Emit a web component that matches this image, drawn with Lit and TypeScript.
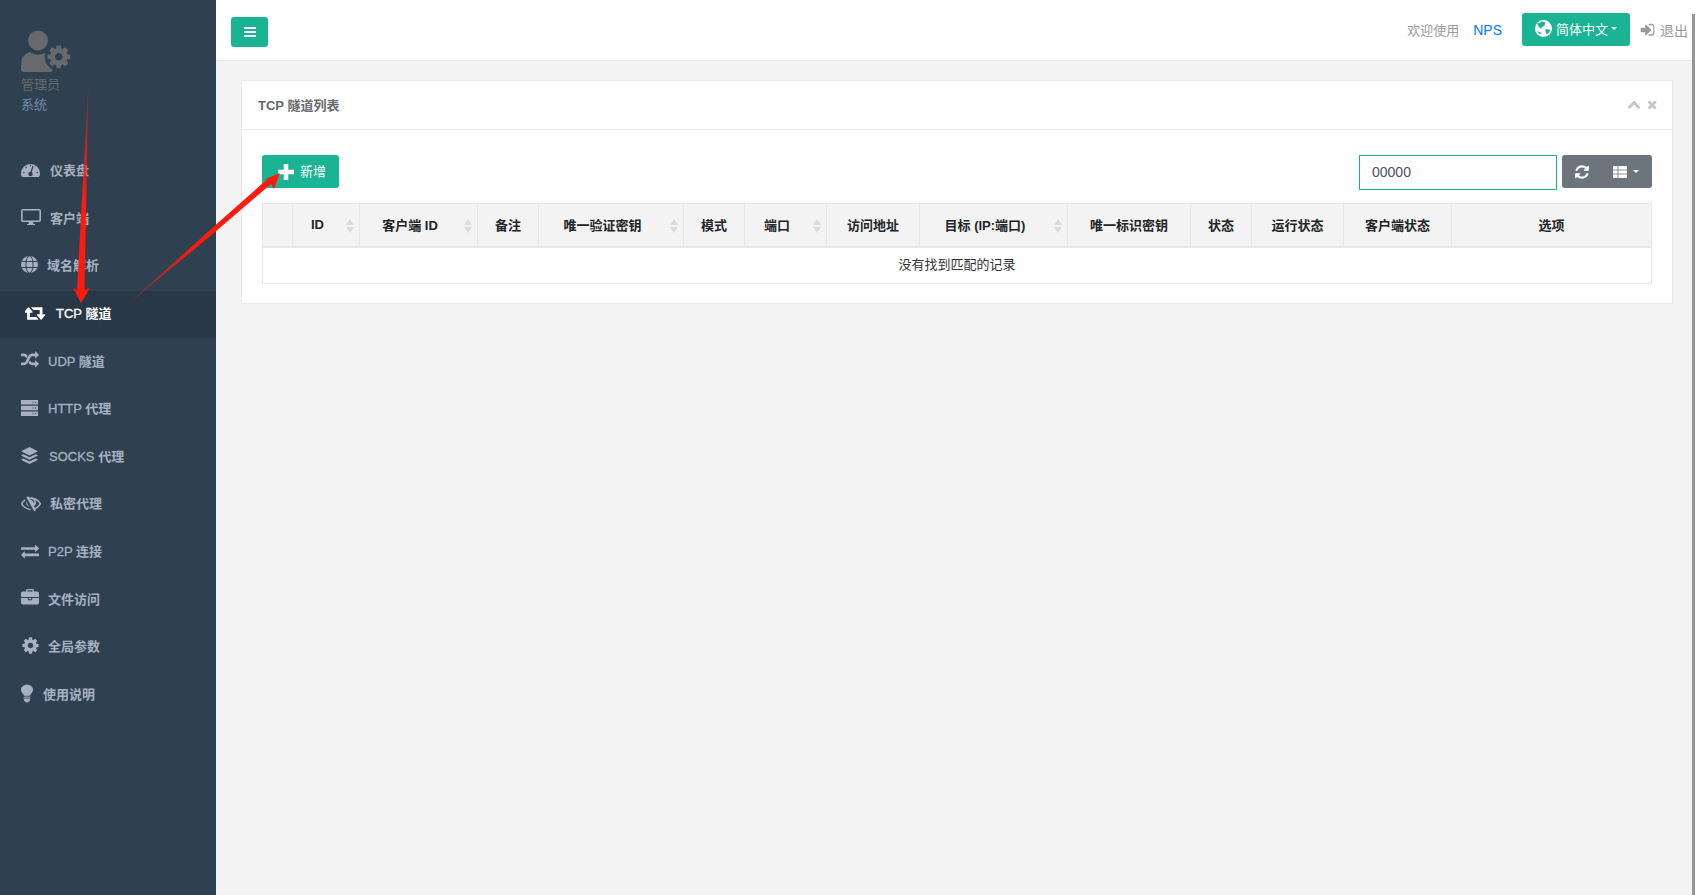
import { LitElement, html, css, svg } from "lit";
import { customElement } from "lit/decorators.js";

const FA = (d: string, w = 1792, vb = "0 0") => html`<svg viewBox="${vb} ${w} 1792" fill="currentColor" aria-hidden="true"><path d="${d}"></path></svg>`;

const GEAR = "M1152 896q0-106-75-181t-181-75-181 75-75 181 75 181 181 75 181-75 75-181zm512-109v222q0 12-8 23t-20 13l-185 28q-19 54-39 91 35 50 107 138 10 12 10 25t-9 23q-27 37-99 108t-94 71q-12 0-26-9l-138-108q-44 23-91 38-16 136-29 186-7 28-36 28h-222q-14 0-24.500-8.500t-11.500-21.500l-28-184q-49-16-90-37l-141 107q-10 9-25 9-14 0-25-11-126-114-165-168-7-10-7-23 0-12 8-23 15-21 51-66.500t54-70.500q-27-50-41-99l-183-27q-13-2-21-12.500t-8-23.500v-222q0-12 8-23t19-13l186-28q14-46 39-92-40-57-107-138-10-12-10-24 0-10 9-23 26-36 98.500-107.500t94.500-71.500q13 0 26 10l138 107q44-23 91-38 16-136 29-186 7-28 36-28h222q14 0 24.500 8.500t11.500 21.500l28 184q49 16 90 37l142-107q9-9 24-9 13 0 25 10 129 119 165 170 7 8 7 22 0 12-8 23-15 21-51 66.500t-54 70.500q26 50 41 98l183 28q13 2 21 12.500t8 23.500z";

const tachometer = html`<svg viewBox="0 0 19 15" fill="currentColor" aria-hidden="true"><path d="M0 11.500a9.500 9.500 0 0 1 19 0q0 2-1 3.500H1q-1-1.500-1-3.500z"></path><g stroke="#2f4050" stroke-width="1.300" stroke-linecap="round" fill="none"><path d="M9.500 11.500L12 4.500M2.800 10.500h.1M5 5.500h.1M9.500 3.500h.1M16.200 10.500h.1"></path></g><circle cx="9.500" cy="12" r="2.200" fill="#2f4050"></circle></svg>`;
const desktop = html`<svg viewBox="0 0 20 16" aria-hidden="true"><rect x=".8" y=".8" width="18.400" height="11.400" rx="1" fill="none" stroke="currentColor" stroke-width="1.600"></rect><path d="M8 13h4l.5 2h1.500v1H6v-1h1.500z" fill="currentColor"></path></svg>`;
const globe = html`<svg viewBox="0 0 17 17" aria-hidden="true"><circle cx="8.500" cy="8.500" r="8.500" fill="currentColor"></circle><g stroke="#2f4050" stroke-width="1" fill="none"><ellipse cx="8.500" cy="8.500" rx="3.600" ry="8.500"></ellipse><path d="M.5 5.500h16M.5 11.500h16"></path></g></svg>`;
const server = html`<svg viewBox="0 0 17 16" aria-hidden="true"><path fill="currentColor" d="M0 0h17v4.600H0zM0 5.700h17v4.600H0zM0 11.400h17V16H0z"></path><path stroke="#2f4050" stroke-width="1" d="M11.500 2.300h1M14 2.300h1M11.500 8h1M14 8h1M11.500 13.700h1M14 13.700h1"></path></svg>`;
const layers = html`<svg viewBox="0 0 17 17" fill="currentColor" aria-hidden="true"><path d="M8.500 0L17 4.300 8.500 8.600 0 4.300zM2.400 7.200l6.100 3 6.100-3L17 8.500l-8.500 4.300L0 8.500zM2.400 11.400l6.100 3 6.100-3L17 12.700 8.500 17 0 12.700z"></path></svg>`;
const th = html`<svg viewBox="0 0 14 12" aria-hidden="true"><path fill="#fff" d="M0 0h14v12H0z"></path><path stroke="#6c757d" stroke-width=".8" d="M5 0v12M0 4h14M0 8h14"></path></svg>`;
const langGlobe = html`<svg viewBox="0 0 16 16" aria-hidden="true"><circle cx="8" cy="8" r="8" fill="#fff"></circle><path fill="#1ab394" d="M6.500 1.500q3 0 3 2t-2 2.500-1.500 2-2.500-2 .5-3zM9.500 9q3-1 5 .5-1 3-3.500 4-1-2-1.500-4.500zM2 10.500q2 0 3.500 1.500l1 1.500q-2 0-3-1z"></path></svg>`;

const bars = "M1664 1344v128q0 26-19 45t-45 19h-1408q-26 0-45-19t-19-45v-128q0-26 19-45t45-19h1408q26 0 45 19t19 45zm0-512v128q0 26-19 45t-45 19h-1408q-26 0-45-19t-19-45v-128q0-26 19-45t45-19h1408q26 0 45 19t19 45zm0-512v128q0 26-19 45t-45 19h-1408q-26 0-45-19t-19-45v-128q0-26 19-45t45-19h1408q26 0 45 19t19 45z";
const retweet = "M1216 1504q0 13-9.500 22.500t-22.500 9.500h-960q-8 0-13.500-2t-9-7-5.500-8-3-11.500-1-11.500v-600h-192q-26 0-45-19t-19-45q0-24 15-41l320-384q19-22 49-22t49 22l320 384q15 17 15 41 0 26-19 45t-45 19h-192v384h576q16 0 25 11l160 192q7 10 7 21zm640-416q0 24-15 41l-320 384q-20 23-49 23t-49-23l-320-384q-15-17-15-41 0-26 19-45t45-19h192v-384h-576q-16 0-25-12l-160-192q-7-9-7-20 0-13 9.500-22.500t22.500-9.500h960q8 0 13.500 2t9 7 5.500 8 3 11.500 1 11.500v600h192q26 0 45 19t19 45z";
const random = "M666 481q-60 92-137 273-22-45-37-72.500t-40.500-63.500-51-56.500-63-35-81.500-14.500h-224q-14 0-23-9t-9-23v-192q0-14 9-23t23-9h224q250 0 410 225zm1126 799q0 14-9 23l-320 320q-9 9-23 9-13 0-22.500-9.500t-9.500-22.500v-192q-32 0-85 .5t-81 1-73-1-71-5-64-10.500-63-18.500-58-28.500-59-40-55-53.500-56-69.500q59-93 136-273 22 45 37 72.500t40.500 63.500 51 56.500 63 35 81.500 14.500h256v-192q0-14 9-23t23-9q12 0 24 10l319 319q9 9 9 23zm0-896q0 14-9 23l-320 320q-9 9-23 9-13 0-22.500-9.500t-9.500-22.500v-192h-256q-48 0-87 15t-69 45-51 61.500-45 77.500q-32 62-78 171-29 66-49.500 111t-54 105-64 100-74 83-90 68.500-106.500 42-128 16.500h-224q-14 0-23-9t-9-23v-192q0-14 9-23t23-9h224q48 0 87-15t69-45 51-61.500 45-77.500q32-62 78-171 29-66 49.500-111t54-105 64-100 74-83 90-68.500 106.500-42 128-16.500h256v-192q0-14 9-23t23-9q12 0 24 10l319 319q9 9 9 23z";
const eyeSlashD = "M555 1335l78-141q-87-63-136-159t-49-203q0-121 61-225-229 117-381 353 167 258 427 375zm389-759q0-20-14-34t-34-14q-125 0-214.500 89.500t-89.500 214.500q0 20 14 34t34 14 34-14 14-34q0-86 61-147t147-61q20 0 34-14t14-34zm363-191q0 7-1 9-106 189-316 567t-315 566l-49 89q-10 16-28 16-12 0-134-70-16-10-16-28 0-12 44-87-143-65-263.500-173t-208.500-245q-20-31-20-69t20-69q153-235 380-371t496-136q89 0 180 17l54-97q10-16 28-16 5 0 18 6t31 15.500 33 18.500 31.500 18.500 19.500 11.500q16 10 16 27zm37 447q0 139-79 253.500t-209 164.500l280-502q8 45 8 84zm448 128q0 35-20 69-39 64-109 145-150 172-347.500 267t-419.500 95l74-132q212-18 392.500-137t301.500-307q-115-179-282-294l63-112q95 64 182.500 153t144.500 184q20 34 20 69z";
const eyeSlash = html`<svg viewBox="0 0 1792 1792" fill="currentColor" aria-hidden="true"><g transform="translate(1792 0) scale(-1 1)"><path d="${eyeSlashD}"></path></g></svg>`;
const exchange = "M1792 1184v192q0 13-9.500 22.500t-22.500 9.500h-1376v192q0 13-9.500 22.500t-22.500 9.500q-12 0-24-10l-319-320q-9-9-9-22 0-14 9-23l320-320q9-9 23-9 13 0 22.500 9.500t9.500 22.500v192h1376q13 0 22.500 9.500t9.500 22.500zm0-544q0 14-9 23l-320 320q-9 9-23 9-13 0-22.500-9.500t-9.500-22.500v-192h-1376q-13 0-22.500-9.500t-9.500-22.500v-192q0-13 9.500-22.500t22.500-9.500h1376v-192q0-14 9-23t23-9q12 0 24 10l319 319q9 9 9 23z";
const briefcase = "M640 256h512v-128h-512v128zm1152 640v480q0 66-47 113t-113 47h-1472q-66 0-113-47t-47-113v-480h672v160q0 26 19 45t45 19h320q26 0 45-19t19-45v-160h672zm-768 0v128h-256v-128h256zm768-480v384h-1792v-384q0-66 47-113t113-47h352v-160q0-40 28-68t68-28h576q40 0 68 28t28 68v160h352q66 0 113 47t47 113z";
const bulbD = "M1024 576q0 155-103 268-45 49-74.500 87t-59.500 95.500-34 107.500q47 28 47 82 0 37-25 64 25 27 25 64 0 52-45 81 13 23 13 47 0 46-31.500 71t-77.500 25q-20 44-60 70t-87 26-87-26-60-70q-46 0-77.500-25t-31.500-71q0-24 13-47-45-29-45-81 0-37 25-64-25-27-25-64 0-54 47-82-4-50-34-107.500t-59.500-95.500-74.500-87q-103-113-103-268 0-99 44.500-184.500t117-142 164-89 186.500-32.500 186.500 32.500 164 89 117 142 44.500 184.500z";
const bulb = html`<svg viewBox="0 0 1024 1792" aria-hidden="true"><path fill="currentColor" d="${bulbD}"></path><path stroke="#2f4050" stroke-width="70" d="M250 1130h524M250 1290h524"></path></svg>`;
const signIn = "M1184 896q0 26-19 45l-544 544q-19 19-45 19t-45-19-19-45v-288h-448q-26 0-45-19t-19-45v-384q0-26 19-45t45-19h448v-288q0-26 19-45t45-19 45 19l544 544q19 19 19 45zm352-352v704q0 119-84.500 203.500t-203.500 84.500h-320q-32 0-32-32v-96q0-32 32-32h320q66 0 113-47t47-113v-704q0-66-47-113t-113-47h-320q-32 0-32-32v-96q0-32 32-32h320q119 0 203.500 84.500t84.500 203.500z";
const refresh = "M1639 1056q0 5-1 7-64 268-268 434.500t-478 166.500q-146 0-282.500-55t-243.500-157l-129 129q-19 19-45 19t-45-19-19-45v-448q0-26 19-45t45-19h448q26 0 45 19t19 45-19 45l-137 137q71 66 161 102t187 36q134 0 250-65t186-179q11-17 53-117 8-23 30-23h192q13 0 22.500 9.500t9.500 22.500zm25-800v448q0 26-19 45t-45 19h-448q-26 0-45-19t-19-45 19-45l138-138q-148-137-349-137-134 0-250 65t-186 179q-11 17-53 117-8 23-30 23h-199q-13 0-22.500-9.500t-9.500-22.500v-7q65-268 270-434.500t480-166.500q146 0 284 55.500t245 156.500l130-129q19-19 45-19t45 19 19 45z";
const times = "M1490 1322q0 40-28 68l-136 136q-28 28-68 28t-68-28l-294-294-294 294q-28 28-68 28t-68-28l-136-136q-28-28-28-68t28-68l294-294-294-294q-28-28-28-68t28-68l136-136q28-28 68-28t68 28l294 294 294-294q28-28 68-28t68 28l136 136q28 28 28 68t-28 68l-294 294 294 294q28 28 28 68z";
const chevUp = "M1683 1331l-166 165q-19 19-45 19t-45-19l-531-531-531 531q-19 19-45 19t-45-19l-166-165q-19-19-19-45.500t19-45.500l742-741q19-19 45-19t45 19l742 741q19 19 19 45.500t-19 45.500z";

interface NavItem { latin?: string; label: string; icon: unknown; box: number; size: number; active?: boolean }
const NAV: NavItem[] = [
  { label: "仪表盘", icon: tachometer, box: 29, size: 19 },
  { label: "客户端", icon: desktop, box: 29, size: 20 },
  { label: "域名解析", icon: globe, box: 26, size: 17 },
  { latin: "TCP ", label: "隧道", icon: FA(retweet, 1920), box: 31, size: 21, active: true },
  { latin: "UDP ", label: "隧道", icon: FA(random), box: 27, size: 18 },
  { latin: "HTTP ", label: "代理", icon: server, box: 27, size: 17 },
  { latin: "SOCKS ", label: "代理", icon: layers, box: 28, size: 17 },
  { label: "私密代理", icon: eyeSlash, box: 29, size: 20 },
  { latin: "P2P ", label: "连接", icon: FA(exchange), box: 27, size: 18 },
  { label: "文件访问", icon: FA(briefcase), box: 27, size: 18 },
  { label: "全局参数", icon: FA(GEAR, 1792), box: 27, size: 19 },
  { label: "使用说明", icon: bulb, box: 22, size: 12 },
];

interface Col { label: string; w: number; sort?: boolean }
const COLS: Col[] = [
  { label: "", w: 30 },
  { label: "ID", w: 67, sort: true },
  { label: "客户端 ID", w: 118, sort: true },
  { label: "备注", w: 61 },
  { label: "唯一验证密钥", w: 145, sort: true },
  { label: "模式", w: 61 },
  { label: "端口", w: 82, sort: true },
  { label: "访问地址", w: 93 },
  { label: "目标 (IP:端口)", w: 148, sort: true },
  { label: "唯一标识密钥", w: 123 },
  { label: "状态", w: 61 },
  { label: "运行状态", w: 92 },
  { label: "客户端状态", w: 108 },
  { label: "选项", w: 200 },
];

@customElement("app-root")
export class AppRoot extends LitElement {
  static styles = css`
    :host { display: block; position: relative; width: 1695px; height: 895px; overflow: hidden; background: #f3f3f4;
      font-family: "Liberation Sans", "Noto Sans CJK SC", Arial, sans-serif; font-size: 13px; color: #676a6c; }
    * { box-sizing: border-box; }
    svg { display: block; }
    .layout { display: flex; height: 100%; }
    .side { width: 216px; flex: none; background: #2f4050; }
    .profile { height: 148px; padding: 30px 0 0 21px; }
    .avatar { width: 50px; height: 42px; margin-bottom: 3px; }
    .role { line-height: 20px; color: #676a6c; }
    .sys { line-height: 20px; color: #6f8caa; }
    .nav { margin: 0; padding: 0; list-style: none; }
    .nav li { display: flex; align-items: center; height: 47.6px; padding: 0 0 4px 21px; color: #a7b1c2; font-weight: 600; white-space: pre; }
    .nav li.active { background: #293846; color: #fff; padding-left: 25px; }
    .nav .ic { display: block; flex: none; }
    .nav .lat { font-weight: 400; -webkit-text-stroke: .3px currentColor; }
    .main { flex: 1; min-width: 0; display: flex; flex-direction: column; }
    .top { height: 61px; flex: none; display: flex; align-items: center; background: #fff; border-bottom: 1px solid #e7eaec; padding: 0 7px 0 15px; }
    .burger { width: 37px; height: 30px; display: flex; align-items: center; justify-content: center; background: #1ab394; color: #fff; border-radius: 3px; margin-top: 3px; }
    .burger svg { width: 14px; height: 14px; }
    .spacer { flex: 1; }
    .welcome { color: #999c9e; margin-bottom: 2px; }
    .nps { color: #007bff; font-size: 14px; margin: 0 20px 0 14px; }
    .lang { display: flex; align-items: center; width: 108px; height: 33px; padding-left: 13px; background: #1ab394; color: #fff; border-radius: 3px; margin-bottom: 2px; padding-bottom: 2px; }
    .lang svg { width: 17px; height: 17px; margin-right: 4px; }
    .caret { width: 0; height: 0; border: 3.500px solid transparent; border-top-color: currentColor; border-bottom: 0; margin-left: 3px; }
    .logout { display: flex; align-items: center; margin-left: 10px; color: #999c9e; font-size: 14px; margin-bottom: 1px; }
    .logout svg { width: 15px; height: 16px; margin-right: 5px; }
    .content { padding: 19px 22px 0 25px; }
    .card { background: #fff; border: 1px solid #e7eaec; height: 224px; }
    .card-h { height: 49px; display: flex; align-items: center; padding: 0 14px 2px 16px; border-bottom: 1px solid #e7eaec; font-weight: 700; color: #676a6c; }
    .tools { display: flex; align-items: center; gap: 4px; color: #c4c6c8; margin-left: auto; }
    .tools svg { width: 14px; height: 14px; }
    .tools svg + svg { width: 13px; height: 13px; }
    .card-b { padding: 25px 20px 0 20px; }
    .bar { display: flex; align-items: flex-start; height: 48px; }
    .add { display: flex; align-items: center; width: 77px; height: 33px; padding-left: 16px; background: #1ab394; color: #fff; border-radius: 3px; }
    .add svg { width: 16px; height: 16px; margin-right: 6px; }
    .add span { margin-bottom: 2px; }
    .search { margin-left: auto; width: 198px; height: 35px; border: 1px solid #1ab394; padding: 0 12px 2px; display: flex; align-items: center; font-size: 14px; color: #495057; }
    .grp { margin-left: 5px; width: 90px; height: 33px; display: flex; align-items: center; background: #6c757d; color: #fff; border-radius: 3px; padding-left: 12px; }
    .grp .rf { width: 16px; height: 16px; margin-right: 23px; }
    .grp .tb { width: 14px; height: 12px; }
    .grp .caret { margin-left: 6px; }
    table { border-collapse: collapse; table-layout: fixed; width: 1389px; }
    th { height: 43px; padding: 0 0 1px; background: #f3f3f3; border: 1px solid #e7e7e7; border-bottom-width: 2px; color: #212529; font-weight: 700; position: relative; }
    th.sortable { padding-right: 17px; }
    td { height: 37px; padding: 0 0 3px; border: 1px solid #e7e7e7; text-align: center; color: #333; }
    .sort { position: absolute; right: 5px; top: 15px; width: 8px; height: 14px; }
    .sort i { display: block; width: 0; height: 0; border: 4px solid transparent; }
    .sort i:first-child { border-bottom: 6px solid #dcdcdc; border-top: 0; margin-bottom: 2px; }
    .sort i:last-child { border-top: 6px solid #dcdcdc; border-bottom: 0; }
    .edge { position: absolute; right: 0; top: 14px; bottom: 0; width: 3px; background: #979797; }
    .arrows { position: absolute; left: 0; top: 0; width: 1695px; height: 895px; pointer-events: none; }
  `;

  render() {
    return html`
      <div class="layout">
        <aside class="side">
          <div class="profile">
            <svg class="avatar" viewBox="0 0 50 42" aria-hidden="true">
              <circle cx="17" cy="10.500" r="10" fill="#676a6c"></circle>
              <path d="M0 36q0-12 9-14 4 3 8 3t9-3q5 1 8 6l-3 14H3q-3 0-3-3z" fill="#676a6c"></path>
              <g transform="translate(24.500 13.500) scale(.0148)"><circle cx="896" cy="896" r="950" fill="#2f4050"></circle><path d="${GEAR}" fill="#676a6c"></path></g>
            </svg>
            <div class="role">管理员</div>
            <div class="sys">系统</div>
          </div>
          <ul class="nav">
            ${NAV.map((n) => html`<li class="${n.active ? "active" : ""}">
              <span class="ic" style="width:${n.box}px"><span class="ic" style="width:${n.size}px">${n.icon}</span></span>
              <span>${n.latin ? html`<span class="lat">${n.latin}</span>` : ""}${n.label}</span>
            </li>`)}
          </ul>
        </aside>
        <div class="main">
          <header class="top">
            <div class="burger">${FA(bars, 1792)}</div>
            <div class="spacer"></div>
            <span class="welcome">欢迎使用</span>
            <span class="nps">NPS</span>
            <div class="lang">${langGlobe}<span>简体中文</span><span class="caret"></span></div>
            <div class="logout">${FA(signIn, 1536)}<span>退出</span></div>
          </header>
          <div class="content">
            <section class="card">
              <div class="card-h"><span>TCP 隧道列表</span>
                <div class="tools">${FA(chevUp)}${FA(times, 1408, "100 0")}</div>
              </div>
              <div class="card-b">
                <div class="bar">
                  <div class="add"><svg viewBox="0 0 16 16" aria-hidden="true"><path d="M5.750 0h4.500v5.750H16v4.500h-5.750V16h-4.500v-5.750H0v-4.500h5.750z" fill="#fff"></path></svg><span>新增</span></div>
                  <div class="search">00000</div>
                  <div class="grp"><span class="rf">${FA(refresh)}</span><span class="tb">${th}</span><span class="caret"></span></div>
                </div>
                <table>
                  <colgroup>${COLS.map((c) => html`<col style="width:${c.w}px" />`)}</colgroup>
                  <thead><tr>${COLS.map((c) => html`<th class="${c.sort ? "sortable" : ""}">${c.label}${c.sort ? html`<span class="sort"><i></i><i></i></span>` : ""}</th>`)}</tr></thead>
                  <tbody><tr><td colspan="14">没有找到匹配的记录</td></tr></tbody>
                </table>
              </div>
            </section>
          </div>
        </div>
      </div>
      <div class="edge"></div>
      <svg class="arrows" viewBox="0 0 1695 895" aria-hidden="true">
        ${svg`<defs>
          <linearGradient id="a1" x1="0" y1="80" x2="0" y2="200" gradientUnits="userSpaceOnUse"><stop offset="0" stop-color="#ff1a0d" stop-opacity=".25"></stop><stop offset="1" stop-color="#ff1a0d"></stop></linearGradient>
          <linearGradient id="a2" x1="127" y1="305" x2="190" y2="248" gradientUnits="userSpaceOnUse"><stop offset="0" stop-color="#ff1a0d" stop-opacity=".25"></stop><stop offset="1" stop-color="#ff1a0d"></stop></linearGradient>
        </defs>
        <polygon fill="url(#a1)" points="88.500,80 84.500,290 90,288 81,303 73,288 77,290"></polygon>
        <polygon fill="url(#a2)" points="127,305 215,225.500 268,178.500 263,180 280,173 274,189 271,184 215,232"></polygon>`}
      </svg>
    `;
  }
}
